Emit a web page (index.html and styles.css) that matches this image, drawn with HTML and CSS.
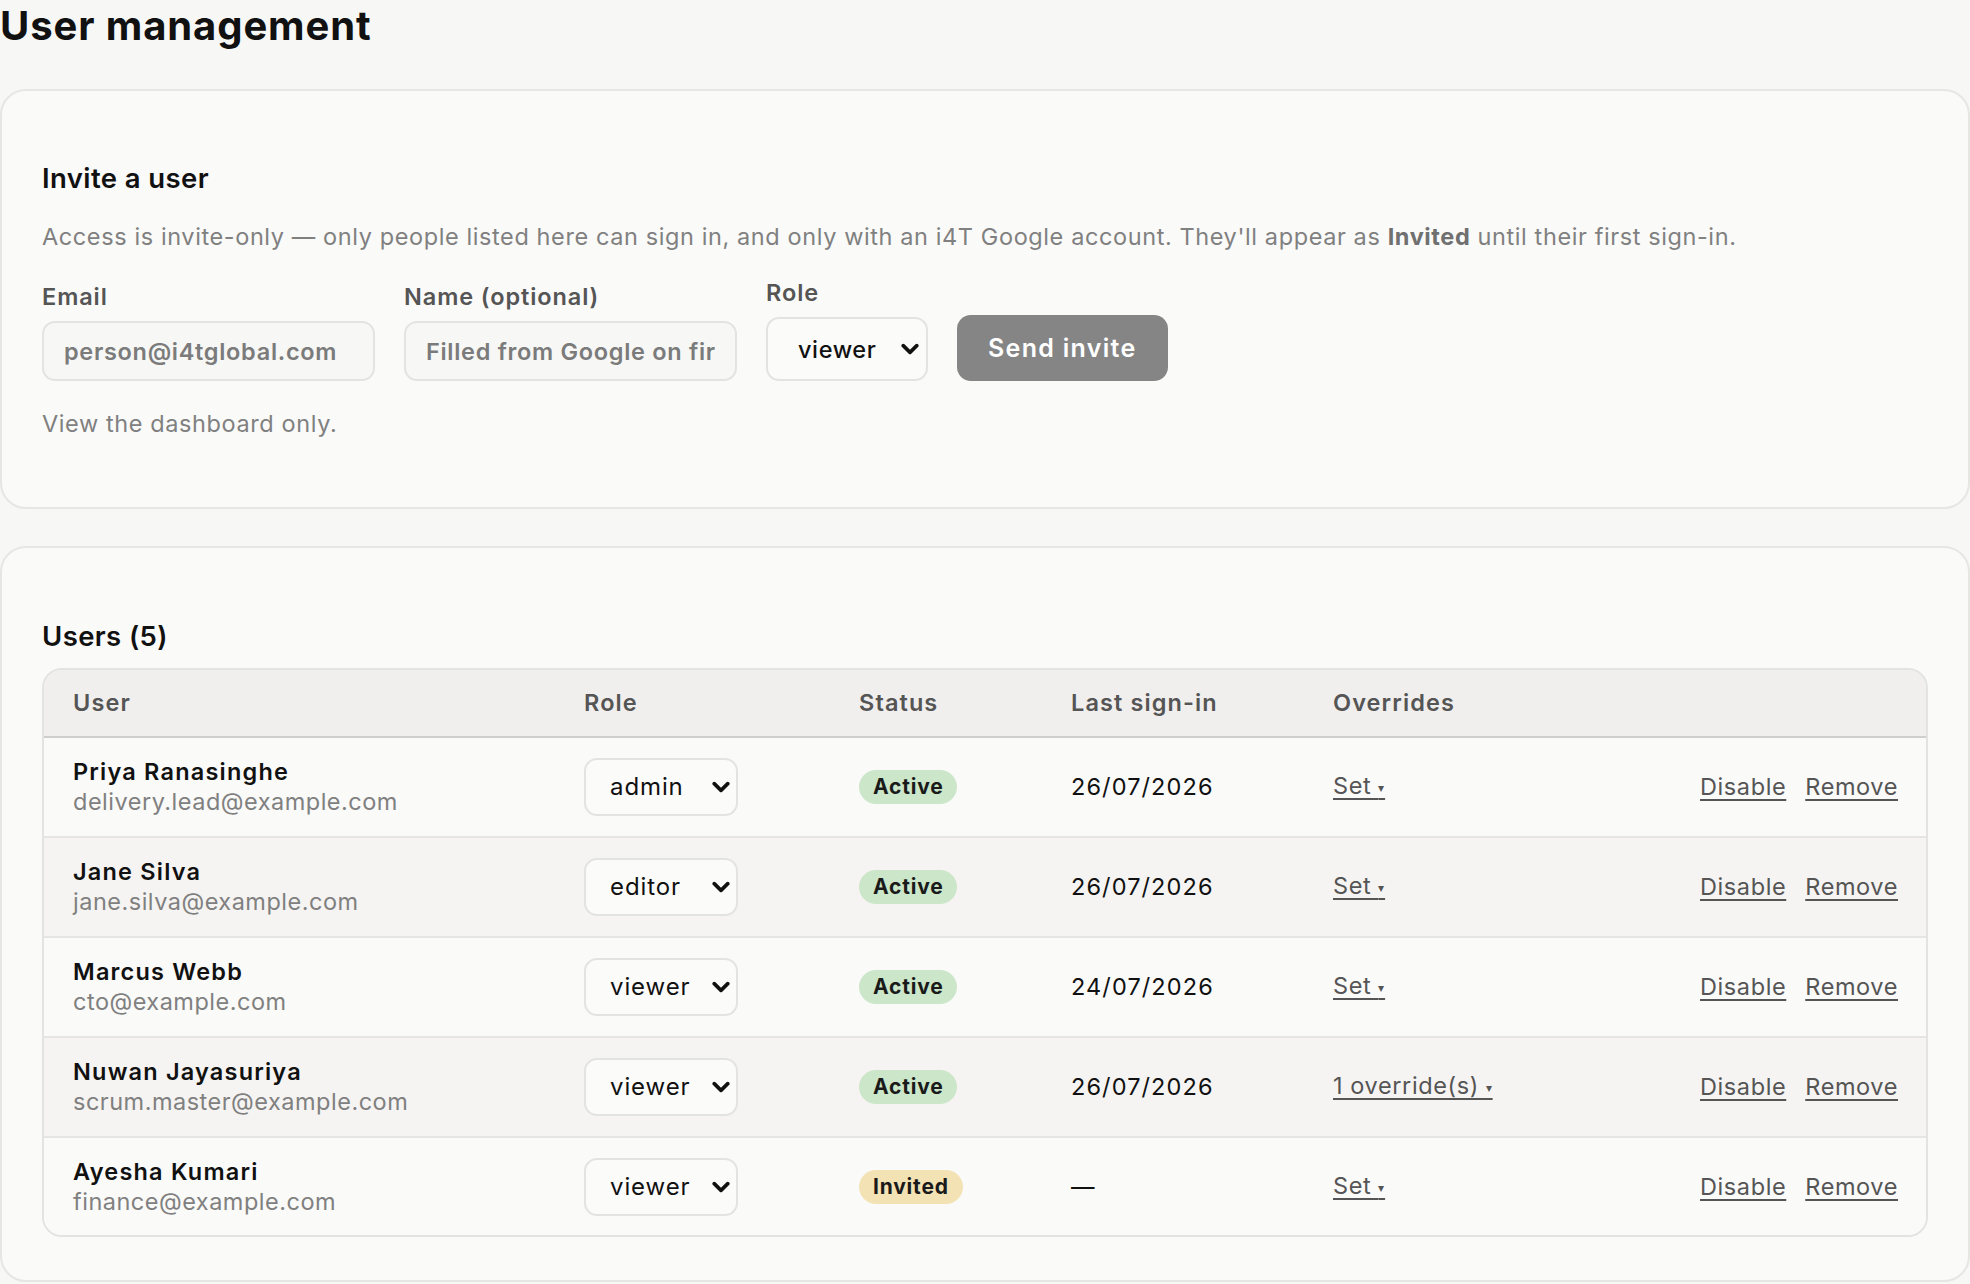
FILE: index.html
```html
<!DOCTYPE html>
<html lang="en">
<head>
<meta charset="utf-8">
<title>User management</title>
<link rel="stylesheet" href="styles.css">
</head>
<body>
<main class="page">
  <h1 class="title">User management</h1>

  <section class="card invite-card">
    <h2 class="card-title">Invite a user</h2>
    <p class="muted desc">Access is invite-only — only people listed here can sign in, and only with an i4T Google account. They'll appear as <strong>Invited</strong> until their first sign-in.</p>
    <form class="invite-form">
      <label class="field">
        <span class="field-label">Email</span>
        <input class="text-input" type="text" placeholder="person@i4tglobal.com">
      </label>
      <label class="field">
        <span class="field-label">Name (optional)</span>
        <input class="text-input" type="text" placeholder="Filled from Google on first sign-in">
      </label>
      <label class="field">
        <span class="field-label">Role</span>
        <span class="select-wrap select-lg">
          <select class="select"><option>viewer</option><option>editor</option><option>admin</option></select>
          <svg class="chev" viewBox="0 0 16 10" aria-hidden="true"><polyline points="2,2 8,8 14,2"/></svg>
        </span>
      </label>
      <button class="btn" type="button">Send invite</button>
    </form>
    <p class="muted hint">View the dashboard only.</p>
  </section>

  <section class="card users-card">
    <h2 class="card-title">Users (5)</h2>
    <div class="table-wrap">
      <table class="users">
        <colgroup>
          <col class="c-user"><col class="c-role"><col class="c-status"><col class="c-last"><col class="c-ovr"><col class="c-act">
        </colgroup>
        <thead>
          <tr><th>User</th><th>Role</th><th>Status</th><th>Last sign-in</th><th>Overrides</th><th></th></tr>
        </thead>
        <tbody>
          <tr>
            <td><div class="name">Priya Ranasinghe</div><div class="email">delivery.lead@example.com</div></td>
            <td><span class="select-wrap select-sm"><select class="select"><option>admin</option></select><svg class="chev" viewBox="0 0 16 10" aria-hidden="true"><polyline points="2,2 8,8 14,2"/></svg></span></td>
            <td><span class="badge badge-active">Active</span></td>
            <td class="date">26/07/2026</td>
            <td><a class="link" href="#">Set <span class="tri">▾</span></a></td>
            <td class="actions"><a class="link" href="#">Disable</a><a class="link" href="#">Remove</a></td>
          </tr>
          <tr>
            <td><div class="name">Jane Silva</div><div class="email">jane.silva@example.com</div></td>
            <td><span class="select-wrap select-sm"><select class="select"><option>editor</option></select><svg class="chev" viewBox="0 0 16 10" aria-hidden="true"><polyline points="2,2 8,8 14,2"/></svg></span></td>
            <td><span class="badge badge-active">Active</span></td>
            <td class="date">26/07/2026</td>
            <td><a class="link" href="#">Set <span class="tri">▾</span></a></td>
            <td class="actions"><a class="link" href="#">Disable</a><a class="link" href="#">Remove</a></td>
          </tr>
          <tr>
            <td><div class="name">Marcus Webb</div><div class="email">cto@example.com</div></td>
            <td><span class="select-wrap select-sm"><select class="select"><option>viewer</option></select><svg class="chev" viewBox="0 0 16 10" aria-hidden="true"><polyline points="2,2 8,8 14,2"/></svg></span></td>
            <td><span class="badge badge-active">Active</span></td>
            <td class="date">24/07/2026</td>
            <td><a class="link" href="#">Set <span class="tri">▾</span></a></td>
            <td class="actions"><a class="link" href="#">Disable</a><a class="link" href="#">Remove</a></td>
          </tr>
          <tr>
            <td><div class="name">Nuwan Jayasuriya</div><div class="email">scrum.master@example.com</div></td>
            <td><span class="select-wrap select-sm"><select class="select"><option>viewer</option></select><svg class="chev" viewBox="0 0 16 10" aria-hidden="true"><polyline points="2,2 8,8 14,2"/></svg></span></td>
            <td><span class="badge badge-active">Active</span></td>
            <td class="date">26/07/2026</td>
            <td><a class="link" href="#">1 override(s) <span class="tri">▾</span></a></td>
            <td class="actions"><a class="link" href="#">Disable</a><a class="link" href="#">Remove</a></td>
          </tr>
          <tr>
            <td><div class="name">Ayesha Kumari</div><div class="email">finance@example.com</div></td>
            <td><span class="select-wrap select-sm"><select class="select"><option>viewer</option></select><svg class="chev" viewBox="0 0 16 10" aria-hidden="true"><polyline points="2,2 8,8 14,2"/></svg></span></td>
            <td><span class="badge badge-invited">Invited</span></td>
            <td class="date">—</td>
            <td><a class="link" href="#">Set <span class="tri">▾</span></a></td>
            <td class="actions"><a class="link" href="#">Disable</a><a class="link" href="#">Remove</a></td>
          </tr>
        </tbody>
      </table>
    </div>
  </section>
</main>
</body>
</html>
```

FILE: styles.css
```css
* { box-sizing: border-box; }

html, body {
  margin: 0;
  padding: 0;
  background: #f7f7f5;
}

body {
  font-family: Inter, "Noto Sans", "Liberation Sans", sans-serif;
  font-size: 23.5px;
  letter-spacing: 0.6px;
  color: #111;
}

.page {
  display: flex;
  flex-direction: column;
  gap: 37px;
}

.title {
  margin: 0;
  font-size: 40px;
  line-height: 52px;
  font-weight: 700;
  letter-spacing: 0.9px;
  color: #111;
}

.card {
  background: #fafaf9;
  border: 2px solid #e6e6e3;
  border-radius: 26px;
  padding: 71px 40px 67px;
}

.users-card {
  padding: 72px 40px 43px;
}

.card-title {
  margin: 0;
  font-size: 27.5px;
  line-height: 32px;
  font-weight: 600;
  letter-spacing: 0.4px;
  color: #111;
}

.muted {
  color: #808080;
  margin: 0;
  line-height: 33px;
}

.muted strong {
  color: #707070;
  font-weight: 700;
}

.desc {
  margin-top: 26px;
}

.invite-form {
  display: flex;
  align-items: flex-end;
  gap: 29px;
  margin-top: 26px;
}

.field {
  display: flex;
  flex-direction: column;
  gap: 10px;
}

.field-label {
  font-weight: 600;
  letter-spacing: 0.9px;
  color: #555;
  line-height: 28px;
}

.text-input {
  width: 333px;
  height: 60px;
  border: 2px solid #e3e3e0;
  border-radius: 13px;
  background: #f7f7f5;
  padding: 0 20px;
  font: inherit;
  letter-spacing: 0.7px;
  font-weight: 600;
  color: #333;
}

.text-input::placeholder {
  color: #7b7b7b;
  font-weight: 600;
}

.select-wrap {
  position: relative;
  display: inline-block;
}

.select {
  appearance: none;
  -webkit-appearance: none;
  font: inherit;
  letter-spacing: inherit;
  color: #111;
  background: #fbfbfa;
  border: 2px solid #e3e3e0;
  border-radius: 13px;
  cursor: pointer;
}

.select-lg .select {
  width: 162px;
  height: 64px;
  padding: 0 0 0 30px;
  font-weight: 500;
}

.select-sm .select {
  width: 154px;
  height: 58px;
  padding: 0 0 0 24px;
  font-size: 24px;
  letter-spacing: 0.9px;
  font-weight: 400;
}

.chev {
  position: absolute;
  top: 50%;
  width: 18px;
  height: 12px;
  margin-top: -6px;
  fill: none;
  stroke: #111;
  stroke-width: 3.2;
  stroke-linecap: round;
  stroke-linejoin: round;
  pointer-events: none;
}

.select-lg .chev { right: 9px; }
.select-sm .chev { right: 8px; }

.btn {
  height: 66px;
  padding: 0 31px;
  border: none;
  border-radius: 14px;
  background: #858585;
  color: #fff;
  font: inherit;
  font-size: 25px;
  letter-spacing: 1.3px;
  font-weight: 600;
  cursor: pointer;
}

.hint {
  margin-top: 26px;
}

.users-card .card-title {
  margin-bottom: 16px;
}

.table-wrap {
  border: 2px solid #e3e3e0;
  border-radius: 20px;
  overflow: hidden;
}

.users {
  width: 100%;
  border-collapse: collapse;
  table-layout: fixed;
}

.c-user { width: 511px; }
.c-role { width: 275px; }
.c-status { width: 212px; }
.c-last { width: 262px; }
.c-ovr { width: 330px; }

.users th {
  height: 67px;
  background: #f0efed;
  border-bottom: 2px solid #cfcfcb;
  text-align: left;
  font-weight: 600;
  letter-spacing: 1.1px;
  color: #555;
  padding: 0 0 0 29px;
  line-height: 28px;
}

.users td {
  height: 100px;
  padding: 0 0 0 29px;
  border-bottom: 2px solid #e6e5e2;
  vertical-align: middle;
  line-height: 30px;
}

.users tbody tr:last-child td { border-bottom: none; height: 98px; }

.users tbody tr:nth-child(odd) td { background: #fafaf9; }
.users tbody tr:nth-child(even) td { background: #f5f4f2; }

.name {
  font-weight: 600;
  letter-spacing: 1.2px;
  color: #111;
}

.email {
  color: #808080;
  letter-spacing: 0.5px;
}

.badge {
  display: inline-block;
  height: 34px;
  line-height: 34px;
  padding: 0 14px;
  border-radius: 17px;
  font-size: 21px;
  letter-spacing: 0.8px;
  font-weight: 700;
  color: #1a1a1a;
}

.badge-active { background: #cbe6c8; }
.badge-invited { background: #f3e2b4; }

.date { color: #111; letter-spacing: 1.1px; }

.link {
  color: #555;
  text-decoration: underline;
  text-underline-offset: 4px;
  text-decoration-thickness: 2px;
}

.tri {
  font-size: 12px;
  vertical-align: 2px;
}

.users td.actions {
  text-align: right;
  padding: 0 28px 0 0;
}

.actions .link + .link {
  margin-left: 19px;
}
```
